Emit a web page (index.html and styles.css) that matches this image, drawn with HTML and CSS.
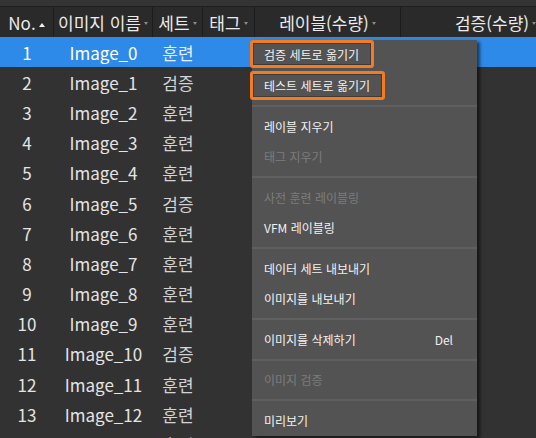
FILE: index.html
```html
<!DOCTYPE html>
<html lang="ko">
<head>
<meta charset="utf-8">
<link rel="stylesheet" href="styles.css">
</head>
<body>
<div class="app">
  <div class="topband"></div>
  <div class="header">
    <div class="hcell"><span>No.</span><i class="sort"></i></div>
    <div class="hcell"><span>이미지 이름</span><i class="drop"></i></div>
    <div class="hcell"><span>세트</span><i class="drop"></i></div>
    <div class="hcell"><span>태그</span><i class="drop"></i></div>
    <div class="hcell"><span>레이블(수량)</span><i class="drop"></i></div>
    <div class="hcell"><span>검증(수량)</span><i class="drop"></i></div>
  </div>
  <div class="rows">
    <div class="row selected"><div>1</div><div>Image_0</div><div>훈련</div><div></div><div></div><div></div></div>
    <div class="row"><div>2</div><div>Image_1</div><div>검증</div><div></div><div></div><div></div></div>
    <div class="row"><div>3</div><div>Image_2</div><div>훈련</div><div></div><div></div><div></div></div>
    <div class="row"><div>4</div><div>Image_3</div><div>훈련</div><div></div><div></div><div></div></div>
    <div class="row"><div>5</div><div>Image_4</div><div>훈련</div><div></div><div></div><div></div></div>
    <div class="row"><div>6</div><div>Image_5</div><div>검증</div><div></div><div></div><div></div></div>
    <div class="row"><div>7</div><div>Image_6</div><div>훈련</div><div></div><div></div><div></div></div>
    <div class="row"><div>8</div><div>Image_7</div><div>훈련</div><div></div><div></div><div></div></div>
    <div class="row"><div>9</div><div>Image_8</div><div>훈련</div><div></div><div></div><div></div></div>
    <div class="row"><div>10</div><div>Image_9</div><div>훈련</div><div></div><div></div><div></div></div>
    <div class="row"><div>11</div><div>Image_10</div><div>검증</div><div></div><div></div><div></div></div>
    <div class="row"><div>12</div><div>Image_11</div><div>훈련</div><div></div><div></div><div></div></div>
    <div class="row"><div>13</div><div>Image_12</div><div>훈련</div><div></div><div></div><div></div></div>
    <div class="row"><div>14</div><div>Image_13</div><div>훈련</div><div></div><div></div><div></div></div>
  </div>

  <div class="menu">
    <div class="item"><span class="hl">검증 세트로 옮기기</span></div>
    <div class="item"><span class="hl">테스트 세트로 옮기기</span></div>
    <div class="sep"></div>
    <div class="item">레이블 지우기</div>
    <div class="item disabled">태그 지우기</div>
    <div class="sep"></div>
    <div class="item disabled">사전 훈련 레이블링</div>
    <div class="item">VFM 레이블링</div>
    <div class="sep"></div>
    <div class="item">데이터 세트 내보내기</div>
    <div class="item">이미지를 내보내기</div>
    <div class="sep"></div>
    <div class="item"><span>이미지를 삭제하기</span><span class="key">Del</span></div>
    <div class="sep"></div>
    <div class="item disabled">이미지 검증</div>
    <div class="sep"></div>
    <div class="item">미리보기</div>
  </div>
</div>
</body>
</html>
```

FILE: styles.css
```css
* { box-sizing: border-box; margin: 0; padding: 0; }
html, body { background: #323232; }
body {
  font-family: "Noto Sans CJK KR", "Noto Sans", sans-serif;
  color: #e6e6e6;
}
.app {
  position: relative;
  width: 536px;
  height: 438px;
  overflow: hidden;
  background: #323232;
}
.topband {
  height: 7px;
  background: #343434;
  border-bottom: 1px solid #1f1f1f;
}
.header, .row {
  display: grid;
  grid-template-columns: 54px 99px 50px 52px 146px 190px;
}
.header {
  height: 30px;
  background: #2a2a2a;
}
.hcell {
  display: flex;
  align-items: center;
  justify-content: center;
  gap: 3px;
  font-size: 17px;
  color: #ececec;
  border-right: 1px solid #1c1c1c;
  white-space: nowrap;
  overflow: hidden;
}
.hcell span { line-height: 1; }
.sort {
  width: 0; height: 0;
  border-left: 3px solid transparent;
  border-right: 3px solid transparent;
  border-bottom: 4px solid #f0f0f0;
  margin-top: 5px;
}
.drop {
  width: 0; height: 0;
  border-left: 2.5px solid transparent;
  border-right: 2.5px solid transparent;
  border-top: 3px solid #8a8a8a;
  margin-top: 2px;
}
.row {
  height: 30.2px;
  font-size: 17px;
  color: #e4e4e4;
}
.row > div {
  display: flex;
  align-items: center;
  justify-content: center;
  white-space: nowrap;
}
.row > div:nth-child(3) { color: #d4d4d4; }
.row.selected { background: #2e8ae8; color: #ffffff; }
.row.selected > div:nth-child(3) { color: #e6f0fb; }

.menu {
  position: absolute;
  left: 252px;
  top: 40px;
  width: 225px;
  background: #535353;
  box-shadow: 3px 2px 3px rgba(0, 0, 0, 0.55);
  font-size: 12px;
  color: #f2f2f2;
}
.item {
  height: 30.5px;
  display: flex;
  align-items: center;
  justify-content: space-between;
  padding: 0 24px 0 12px;
  white-space: nowrap;
}
.item.disabled { color: #7c7c7c; }
.item .hl {
  display: flex;
  align-items: center;
  height: 29px;
  margin-left: -14px;
  padding: 0 12px 0 11px;
  border: 3px solid #f47b20;
  border-radius: 3px;
  box-shadow: inset 0 0 0 1px #3c3c3c;
}
.item:first-child { align-items: flex-start; }
.item:first-child .hl { height: 28px; }
.sep {
  height: 10px;
  display: flex;
  align-items: center;
}
.sep::before {
  content: "";
  display: block;
  width: 100%;
  height: 2px;
  background: #5f5f5f;
}
.key { color: #f0f0f0; }
```
